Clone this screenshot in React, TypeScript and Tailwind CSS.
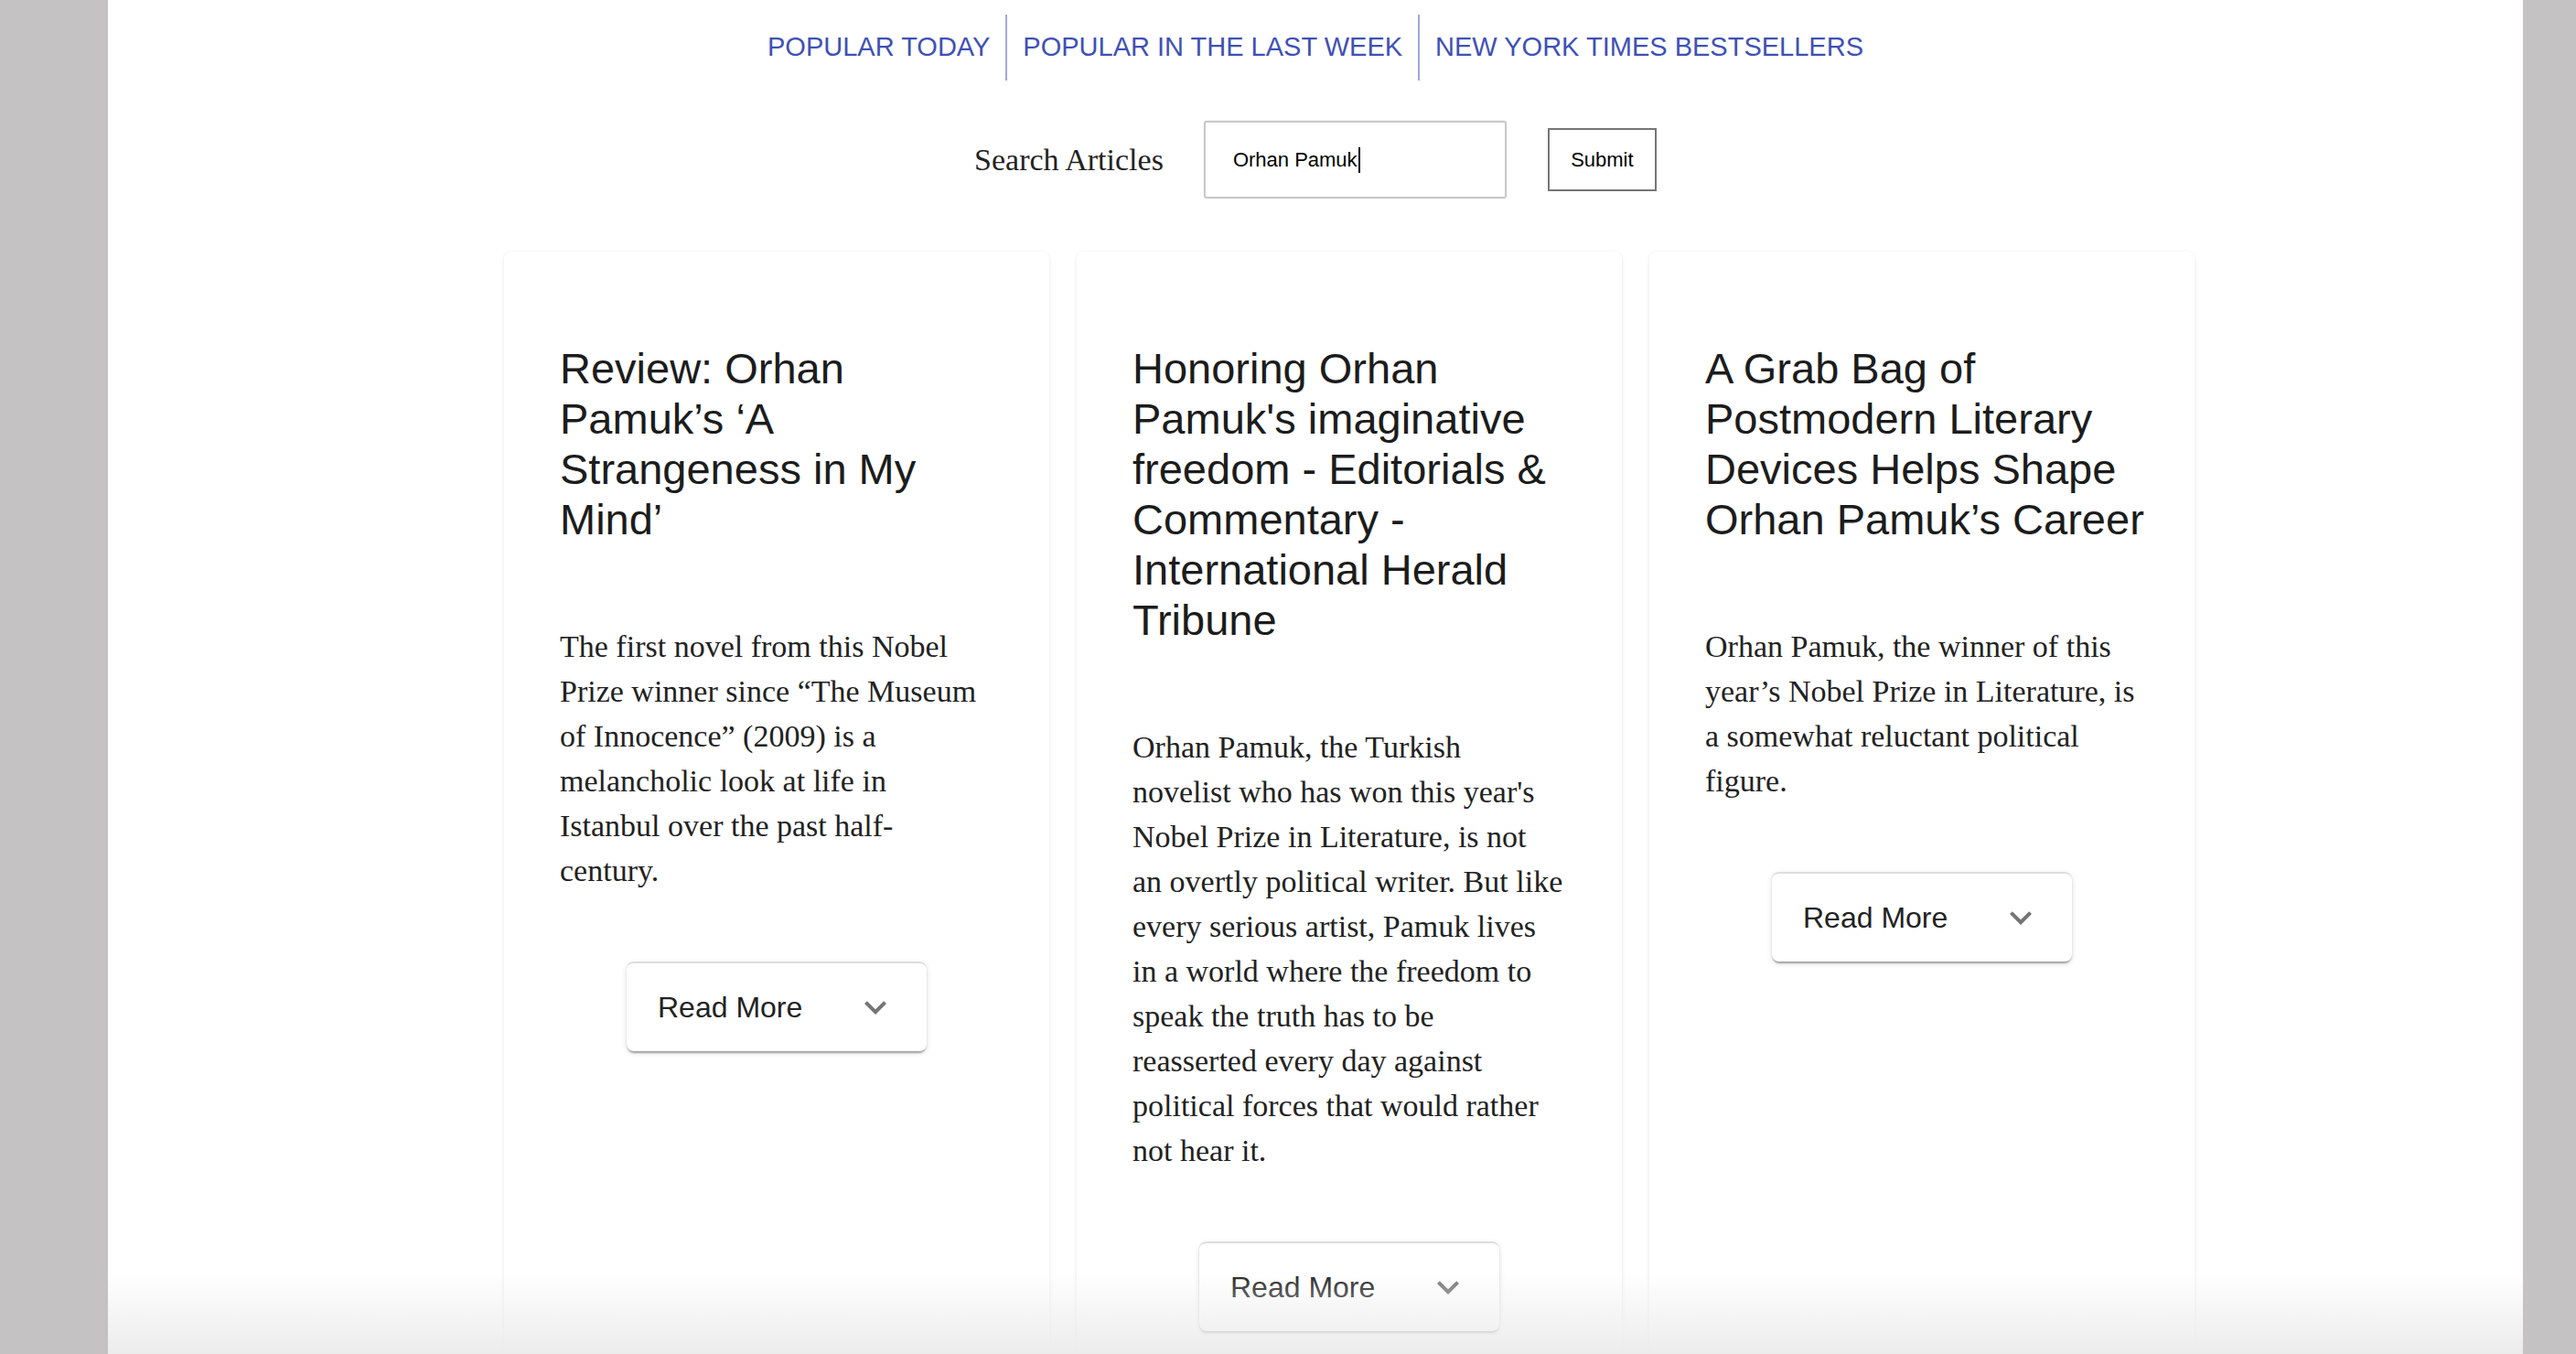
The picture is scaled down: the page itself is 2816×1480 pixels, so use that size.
import { FC } from "react";

// 記事データ（行ごとに区切って、元の折り返し位置を保つ）
interface Article {
  title: string[];
  abstract: string[];
}

const articles: Article[] = [
  {
    title: ["Review: Orhan", "Pamuk’s ‘A", "Strangeness in My", "Mind’"],
    abstract: [
      "The first novel from this Nobel",
      "Prize winner since “The Museum",
      "of Innocence” (2009) is a",
      "melancholic look at life in",
      "Istanbul over the past half-",
      "century.",
    ],
  },
  {
    title: [
      "Honoring Orhan",
      "Pamuk's imaginative",
      "freedom - Editorials &",
      "Commentary -",
      "International Herald",
      "Tribune",
    ],
    abstract: [
      "Orhan Pamuk, the Turkish",
      "novelist who has won this year's",
      "Nobel Prize in Literature, is not",
      "an overtly political writer. But like",
      "every serious artist, Pamuk lives",
      "in a world where the freedom to",
      "speak the truth has to be",
      "reasserted every day against",
      "political forces that would rather",
      "not hear it.",
    ],
  },
  {
    title: ["A Grab Bag of", "Postmodern Literary", "Devices Helps Shape", "Orhan Pamuk’s Career"],
    abstract: [
      "Orhan Pamuk, the winner of this",
      "year’s Nobel Prize in Literature, is",
      "a somewhat reluctant political",
      "figure.",
    ],
  },
];

const navItems = ["POPULAR TODAY", "POPULAR IN THE LAST WEEK", "NEW YORK TIMES BESTSELLERS"];

const sans = "font-['Liberation_Sans',Arial,sans-serif]";
const serif = "font-['Liberation_Serif','Times_New_Roman',serif]";

// Read More（アコーディオン風のボタン）
const ReadMore: FC = () => (
  <div className="mx-auto mt-[75px] flex h-[98px] w-[328px] items-center justify-between rounded-[8px] border-t-2 border-[#dedede] bg-white pl-[34px] pr-[32px] shadow-[0_4px_2px_-2px_rgba(0,0,0,0.2),0_2px_2px_0_rgba(0,0,0,0.14),0_2px_6px_0_rgba(0,0,0,0.12)]">
    <span className={`${sans} text-[32px] text-[#222]`}>Read More</span>
    <svg className="h-[48px] w-[48px] text-[#757575]" viewBox="0 0 24 24" fill="currentColor">
      <path d="M16.59 8.59 12 13.17 7.41 8.59 6 10l6 6 6-6z" />
    </svg>
  </div>
);

const ArticleCard: FC<{ article: Article }> = ({ article }) => (
  <div className="rounded-[8px] bg-white px-[61px] pb-[120px] pt-[100px] shadow-[0_1px_4px_rgba(0,0,0,0.1)]">
    <h2 className={`${sans} text-[47px] leading-[55px] text-[#1c1c1c]`}>
      {article.title.map((line, i) => (
        <span key={i} className="block whitespace-nowrap">
          {line}
        </span>
      ))}
    </h2>
    <p className={`${serif} mt-[87px] text-[34px] leading-[49px] text-[#222]`}>
      {article.abstract.map((line, i) => (
        <span key={i} className="block whitespace-nowrap">
          {line}
        </span>
      ))}
    </p>
    <ReadMore />
  </div>
);

export default function App() {
  return (
    <div className="flex h-[1480px] overflow-hidden bg-[#c4c2c3]">
      <div className="w-[118px] shrink-0" />
      <main className="relative flex-1 bg-white">
        {/* ナビゲーション */}
        <nav className="flex justify-center pt-[16px]">
          {navItems.map((item, i) => (
            <div key={item} className="flex">
              {i > 0 && <div className="w-[2px] bg-[#9fa8da]" />}
              <a className={`${sans} flex h-[72px] items-center px-[17px] text-[29px] text-[#3f51b5]`}>
                {item}
              </a>
            </div>
          ))}
        </nav>

        {/* 検索フォーム */}
        <div className="mt-[44px] flex items-start justify-center">
          <label className={`${serif} mr-[44px] self-center text-[34px] text-[#222]`}>Search Articles</label>
          <div className="flex h-[85px] w-[331px] items-center rounded-[3px] border-2 border-[#c9c9c9] pl-[30px] shadow-[0_0_2px_rgba(0,0,0,0.15)]">
            <span className={`${sans} text-[22px] text-black`}>Orhan Pamuk</span>
            <span className="ml-[1px] h-[28px] w-[2px] bg-black" />
          </div>
          <button
            className={`${sans} ml-[45px] mt-[8px] h-[69px] w-[119px] border-2 border-[#767676] bg-white text-[22px] text-black`}
          >
            Submit
          </button>
        </div>

        {/* 記事カード */}
        <div className="mx-auto mt-[58px] w-[1922px] pl-[74px]">
          <div className="grid grid-cols-3 gap-[30px]">
            {articles.map((a, i) => (
              <ArticleCard key={i} article={a} />
            ))}
          </div>
        </div>

        {/* 下端のフェード */}
        <div className="pointer-events-none absolute bottom-0 left-0 right-0 h-[90px] bg-gradient-to-b from-transparent to-[#ececec]" />
      </main>
      <div className="w-[58px] shrink-0" />
    </div>
  );
}
